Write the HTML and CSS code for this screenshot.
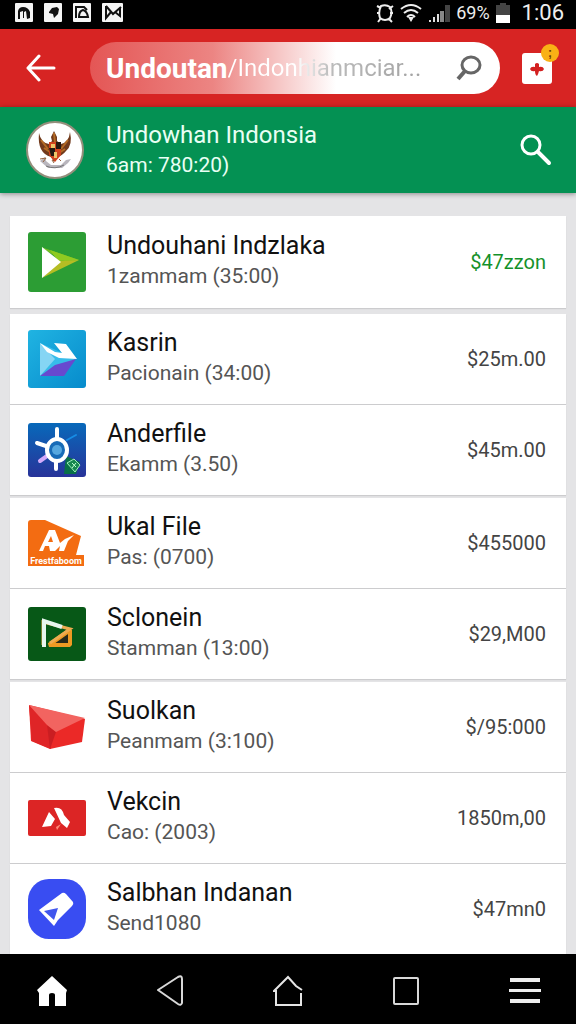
FILE: index.html
```html
<!DOCTYPE html>
<html lang="id">
<head>
    <meta charset="UTF-8">
    <meta name="viewport" content="width=device-width, initial-scale=1.0">
    <title>Undowhan Indonsia</title>
    <link rel="stylesheet" href="styles.css">
</head>
<body>
    <div class="status-bar">
        <div class="status-group">
            <svg width="18" height="19" viewBox="0 0 18 19"><rect width="18" height="19" rx="1" fill="#f5f5f5"/><path d="M3 16V8q1-4 5-4 5 0 7 5v6l-3 1-1-8-2 1v6H8V8L5 9v7z" fill="#111"/></svg>
            <svg width="18" height="19" viewBox="0 0 18 19"><rect width="18" height="19" rx="1" fill="#f5f5f5"/><path d="M5 9l3-4 5-1 2 2-1 5-4 4-1-4-4-1z" fill="#111"/></svg>
            <svg width="18" height="19" viewBox="0 0 18 19"><rect width="18" height="19" rx="1" fill="#f5f5f5"/><path d="M3 3v12M2 4h9l3 3M6 14q0-6 4-7 4 1 5 7z" fill="none" stroke="#111" stroke-width="2"/></svg>
            <svg width="21" height="19" viewBox="0 0 21 19"><rect width="21" height="19" rx="1" fill="#f5f5f5"/><path d="M4 3l7 8 8-7M18 5v8l-5-4M4 3v12l5-6" fill="none" stroke="#111" stroke-width="2"/></svg>
        </div>
        <div class="status-group status-right">
            <svg width="18" height="22" viewBox="0 0 18 22" fill="none" stroke="#eee" stroke-width="2"><path d="M5 4q-3 6-1 12 5 4 10 0 3-6 0-11-4-3-9-1zM1 4l4 2M17 4l-4 3M1 11h3M14 11h3M5 16l-3 4M13 17l3 3"/></svg>
            <svg width="22" height="20" viewBox="0 0 22 20" fill="none" stroke="#eee" stroke-width="2"><path d="M1 6q10-8 20 0M4 10q7-6 14 0M7 14q4-4 8 0"/><path d="M8 14h6l-3 5z" fill="#eee" stroke="none"/></svg>
            <svg width="22" height="20" viewBox="0 0 22 20"><path d="M1 17h2v2H1zM5 14h2v5H5zM9 11h2v8H9z" fill="#ddd"/><path d="M12 8h4v11h-4z" fill="#888"/><path d="M17 2h5v17h-5z" fill="#444"/></svg>
            <span class="battery-text">69%</span>
            <svg width="14" height="20" viewBox="0 0 14 20"><path d="M4 0h6v2h4v18H0V2h4z" fill="#444"/><path d="M0 12h14v8H0z" fill="#fff"/></svg>
            <span class="clock">1:06</span>
        </div>
    </div>

    <header class="top-bar">
        <button class="icon-button back" aria-label="Back">
            <svg width="30" height="28" viewBox="0 0 30 28" fill="none" stroke="#fff" stroke-width="3" stroke-linecap="round" stroke-linejoin="round"><path d="M28 14H2M13 2L2 14l11 12"/></svg>
        </button>
        <form class="search-box">
            <label for="search">Undoutan</label>
            <input type="text" id="search" value="/Indonhianmciar...">
            <button class="icon-button" type="button" aria-label="Search">
                <svg width="26" height="26" viewBox="0 0 26 26" fill="none" stroke="#666" stroke-width="3"><ellipse cx="15" cy="10" rx="9" ry="8"/><path d="M9 16l-7 8" stroke-width="4"/></svg>
            </button>
        </form>
        <button class="icon-button add" aria-label="Add">
            <svg width="30" height="31" viewBox="0 0 30 31"><rect width="30" height="31" rx="3" fill="#fff"/><path d="M13 11q2-2 4 0v3q4-1 5 2-1 3-5 2-1 4-2 5-2-1-2-5-4 1-5-2 1-3 5-2z" fill="#d32020"/></svg>
            <span class="badge">;</span>
        </button>
    </header>

    <section class="account-bar">
        <svg class="emblem" width="58" height="58" viewBox="0 0 58 58">
            <circle cx="29" cy="29" r="28" fill="#fff" stroke="#958f7c" stroke-width="2"/>
            <path d="M13 12q2 10 10 11l3-3-1-4 3-6 3 6v4l4 3q8-2 9-12 3 13-4 19-4 5-9 6l-3 5-3-5Q11 32 13 12z" fill="#713a1c"/>
            <path d="M15 19l7 9M18 27l6 4M42 19l-7 9M39 28l-6 4M28 12l1 10" stroke="#b46b24" stroke-width="2"/>
            <path d="M23 21h12v13l-6 7-6-7z" fill="#cf431e"/>
            <path d="M23 27h6v8h-4zM30 21h5v7h-5z" fill="#251a12"/>
            <path d="M25 23h4v4h-4zM28 31h3v6h-3z" fill="#edc66a"/>
            <path d="M14 40l5-4 1 4 5 4h10l5-5 5-1-3 4-6 5H22z" fill="#b9b6bd"/>
            <path d="M14 38l6-1-3 4M26 39l2 3M33 38l2 2" stroke="#95613b" fill="none"/>
            <path d="M20 45q9 4 18-1" stroke="#777" fill="none"/>
        </svg>
        <div class="account-text">
            <h1>Undowhan Indonsia</h1>
            <p>6am: 780:20)</p>
        </div>
        <button class="icon-button" aria-label="Find">
            <svg width="32" height="32" viewBox="0 0 32 32" fill="none" stroke="#fff"><circle cx="11" cy="11" r="9" stroke-width="3"/><path d="M18 18l11 11" stroke-width="4" stroke-linecap="round"/></svg>
        </button>
    </section>

    <main>
        <ul class="file-list">
            <li class="file-item featured">
                <svg class="logo" width="58" height="60" viewBox="0 0 58 60"><rect width="58" height="60" rx="3" fill="#2c9d34"/><path d="M13 15l38 13-12 2-9-4z" fill="#78bd20"/><path d="M22 18l29 10-21 1z" fill="#8fca21"/><path d="M51 28L14 46l18-17z" fill="#b5bd24"/><path d="M14 15l19 15-19 16z" fill="#fff"/></svg>
                <div class="file-text"><h2>Undouhani Indzlaka</h2><p>1zammam (35:00)</p></div>
                <span class="price">$47zzon</span>
            </li>
            <li class="file-item">
                <svg class="logo" width="58" height="58" viewBox="0 0 58 58"><defs><linearGradient id="sky" x2="1" y2="1"><stop stop-color="#20b4e2"/><stop offset="1" stop-color="#078bcc"/></linearGradient></defs><rect width="58" height="58" rx="3" fill="url(#sky)"/><path d="M12 13v33l36-17z" fill="#37bcea"/><path d="M12 13l15 16L12 46z" fill="#85d5f4"/><path d="M12 46l15-11 21-6-12 17z" fill="#6849cf"/><path d="M12 13l15 9 7 1-8-10 12 1 11 15-18-1-12-6z" fill="#fff"/></svg>
                <div class="file-text"><h2>Kasrin</h2><p>Pacionain (34:00)</p></div>
                <span class="price">$25m.00</span>
            </li>
            <li class="file-item raised">
                <svg class="logo" width="58" height="54" viewBox="0 0 58 54"><defs><linearGradient id="sea" x2="0" y2="1"><stop stop-color="#0869ba"/><stop offset="1" stop-color="#283399"/></linearGradient></defs><rect width="58" height="54" rx="3" fill="url(#sea)"/><path d="M38 33l14 6-4 12H36z" fill="#087048"/><g stroke="#fff" stroke-width="4" stroke-linecap="round"><path d="M29 16V6M18 23L9 20M28 38v8"/><path d="M19 33l-7 5" stroke="#d4aafb"/><path d="M39 17l9-5" stroke="#168ce5" stroke-width="2"/></g><ellipse cx="29" cy="27" rx="10" ry="11" fill="#176bb7" stroke="#fff" stroke-width="4"/><circle cx="29" cy="27" r="5" fill="#55a7df"/><path d="M39 40l7-4 6 6-5 7z" fill="#168850" stroke="#9ff0b9"/><path d="M44 40l4 4M48 40l-4 5" stroke="#bfffd0"/></svg>
                <div class="file-text"><h2>Anderfile</h2><p>Ekamm (3.50)</p></div>
                <span class="price">$45m.00</span>
            </li>
            <li class="file-item">
                <svg class="logo" width="58" height="46" viewBox="0 0 58 46"><path d="M3 0h14l36 16-5 19h8v11H0V3q0-3 3-3z" fill="#f36c12"/><path d="M11 31l10-21h6l5 13 5-4 9-4-6 6-4 10h-5l1-5-5 5h-5l-1-5h-4l-2 5zM20 22h5l-2-6z" fill="#fff" fill-rule="evenodd"/><text x="28" y="44" text-anchor="middle" class="logo-caption">Frestfaboom</text></svg>
                <div class="file-text"><h2>Ukal File</h2><p>Pas: (0700)</p></div>
                <span class="price">$455000</span>
            </li>
            <li class="file-item raised">
                <svg class="logo" width="58" height="54" viewBox="0 0 58 54"><rect width="58" height="54" rx="3" fill="#075817"/><path d="M21 38l21-15v15z" fill="#28291b" stroke="#ed9a23" stroke-width="4" stroke-linejoin="bevel"/><path d="M15 38V15l27 7-20 14" fill="none" stroke="#edab51" stroke-width="3"/><path d="M16 40V14l18 6" fill="none" stroke="#e8f5ee" stroke-width="4"/></svg>
                <div class="file-text"><h2>Sclonein</h2><p>Stamman (13:00)</p></div>
                <span class="price">$29,M00</span>
            </li>
            <li class="file-item">
                <svg class="logo" width="58" height="46" viewBox="0 0 58 46"><path d="M1 1l56 14-3 23-32 7-19-8z" fill="#eb2927"/><path d="M1 1l18 20 4 24-19-8z" fill="#df2527"/><path d="M19 21l9 7-6 17z" fill="#ca1e22"/><path d="M1 1l56 13-29 14-9-7z" fill="#f26460"/></svg>
                <div class="file-text"><h2>Suolkan</h2><p>Peanmam (3:100)</p></div>
                <span class="price">$/95:000</span>
            </li>
            <li class="file-item">
                <svg class="logo" width="58" height="36" viewBox="0 0 58 36"><rect width="58" height="36" rx="2" fill="#dc2525"/><path d="M14 27l7-15 6 7-4 7zM26 8q8-2 10 7l6 7-3 6-6-5z" fill="#fff"/><path d="M33 24l-4 6-1-3z" fill="#ff8b79"/></svg>
                <div class="file-text"><h2>Vekcin</h2><p>Cao: (2003)</p></div>
                <span class="price">1850m,00</span>
            </li>
            <li class="file-item">
                <svg class="logo" width="58" height="60" viewBox="0 0 58 60"><rect width="58" height="60" rx="21" fill="#394df2"/><path d="M11 31l23-17q2-1 4 1l7 8q1 2-1 4L30 41l-4 6z" fill="#fff"/><path d="M16 32l14-3-4 12z" fill="#4156ed"/></svg>
                <div class="file-text"><h2>Salbhan Indanan</h2><p>Send1080</p></div>
                <span class="price">$47mn0</span>
            </li>
        </ul>
    </main>

    <nav class="nav-bar">
        <button class="icon-button" aria-label="Home"><svg width="30" height="32" viewBox="0 0 30 32"><path d="M15 1l15 14-1 3v13H18V20q0-2-3-2t-3 2v11H2V18l-2-3z" fill="#fff"/></svg></button>
        <button class="icon-button" aria-label="Back"><svg width="28" height="32" viewBox="0 0 28 32" fill="none" stroke="#d8d8d8" stroke-width="2" stroke-linejoin="round"><path d="M2 15L22 2q4-2 4 2v24q-1 3-4 1z"/></svg></button>
        <button class="icon-button" aria-label="Launcher"><svg width="30" height="32" viewBox="0 0 30 32" fill="none" stroke="#e5e5e5" stroke-width="2"><path d="M28 18v12H3V16H1L15 2l8 9 6 4"/></svg></button>
        <button class="icon-button" aria-label="Recent apps"><svg width="28" height="30" viewBox="0 0 28 30" fill="none" stroke="#d8d8d8" stroke-width="2"><rect x="2" y="2" width="24" height="26" rx="1"/></svg></button>
        <button class="icon-button" aria-label="Menu"><svg width="32" height="26" viewBox="0 0 32 26"><path d="M1 0h30v4H1zM0 11h32v3H0zM1 21h30v4H1z" fill="#eee"/></svg></button>
    </nav>
</body>
</html>
```
FILE: styles.css
```css
* {
    box-sizing: border-box;
}

body {
    margin: 0;
    height: 100vh;
    display: flex;
    flex-direction: column;
    font-family: Roboto, "Liberation Sans", sans-serif;
    background-color: #e4e4e6;
    overflow: hidden;
}

h1,
h2,
p {
    margin: 0;
    font-weight: 400;
    white-space: nowrap;
}

svg {
    display: block;
    flex-shrink: 0;
}

.icon-button {
    padding: 0;
    border: none;
    background: none;
    cursor: pointer;
}

.status-bar {
    display: flex;
    flex-shrink: 0;
    justify-content: space-between;
    align-items: center;
    height: 29px;
    padding: 0 12px 4px 15px;
    background-color: #000;
    color: #eee;
}

.status-group {
    display: flex;
    align-items: center;
    gap: 11px;
}

.status-right {
    gap: 6px;
}

.battery-text {
    font-size: 18px;
}

.clock {
    margin-left: 6px;
    font-size: 22px;
}

.top-bar {
    display: flex;
    flex-shrink: 0;
    align-items: center;
    height: 78px;
    padding: 0 24px 0 26px;
    background-color: #d72423;
}

.search-box {
    display: flex;
    flex: 1;
    align-items: center;
    min-width: 0;
    height: 52px;
    margin: 0 22px 0 34px;
    padding: 0 18px 0 16px;
    border-radius: 26px;
    background: linear-gradient(to right, #e45655, #ec8583 30%, #fff 60%);
}

.search-box label {
    color: #fff;
    font-size: 28px;
    font-weight: 700;
}

.search-box input {
    flex: 1;
    min-width: 0;
    padding: 0;
    border: none;
    outline: none;
    font-family: inherit;
    font-size: 24px;
    color: transparent;
    background: linear-gradient(to right, #fff 30%, #bbb 45%, #999);
    -webkit-background-clip: text;
    background-clip: text;
}

.add {
    position: relative;
}

.badge {
    position: absolute;
    top: -9px;
    right: -7px;
    width: 18px;
    height: 18px;
    border-radius: 50%;
    background-color: #f9b115;
    color: #6b3908;
    font-size: 12px;
    font-weight: 700;
    line-height: 18px;
}

.account-bar {
    display: flex;
    flex-shrink: 0;
    align-items: center;
    gap: 22px;
    height: 86px;
    padding: 0 24px 0 26px;
    background-color: #049153;
    color: #e9fff4;
    box-shadow: 0 1px 5px rgba(0, 0, 0, 0.4);
}

.account-text {
    flex: 1;
}

.account-text h1 {
    font-size: 24px;
    line-height: 30px;
}

.account-text p {
    font-size: 21px;
    line-height: 30px;
}

main {
    flex: 1;
    min-height: 0;
    padding: 23px 10px 0;
    overflow: hidden;
}

.file-list {
    display: flex;
    flex-direction: column;
    gap: 1px;
    margin: 0;
    padding: 0;
    list-style: none;
}

.file-item {
    display: flex;
    flex-shrink: 0;
    align-items: center;
    gap: 21px;
    min-height: 90px;
    padding: 0 20px 0 18px;
    background-color: #fff;
    box-shadow: 0 1px 1px rgba(0, 0, 0, 0.1);
}

.raised {
    margin-bottom: 2px;
}

.featured {
    min-height: 92px;
    margin-bottom: 5px;
}

.file-text {
    flex: 1;
    padding-bottom: 2px;
}

.file-text h2 {
    font-size: 25px;
    line-height: 30px;
    color: #111;
}

.file-text p {
    font-size: 21px;
    line-height: 30px;
    color: #555;
}

.price {
    font-size: 20px;
    color: #444;
}

.featured .price {
    color: #15912a;
}

.logo-caption {
    font-size: 9px;
    font-weight: 700;
    fill: #fff;
}

.nav-bar {
    display: flex;
    flex-shrink: 0;
    justify-content: space-between;
    align-items: center;
    height: 70px;
    padding: 3px 35px 0 37px;
    background-color: #000;
}
```
